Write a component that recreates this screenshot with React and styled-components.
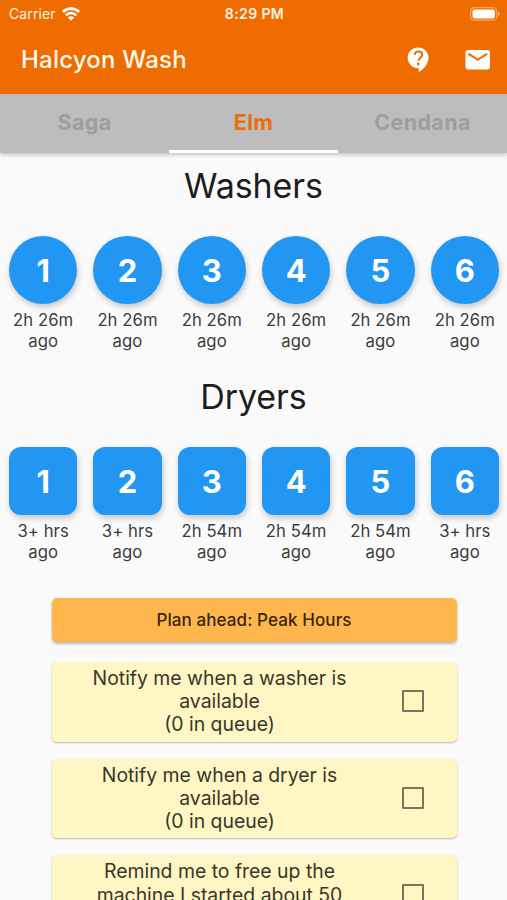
import React from 'react';
import styled, { createGlobalStyle } from 'styled-components';

const GlobalStyle = createGlobalStyle`
  *, *::before, *::after {
    box-sizing: border-box;
  }

  body {
    margin: 0;
    background: #fafafa;
    font-family: Inter, Roboto, sans-serif;
  }
`;

const Screen = styled.div`
  display: flex;
  flex-direction: column;
  width: 507px;
  height: 900px;
  overflow: hidden;
  background: #fafafa;
`;

const StatusBar = styled.div`
  display: grid;
  grid-template-columns: 1fr auto 1fr;
  align-items: center;
  flex: none;
  height: 27px;
  padding: 0 7px 0 9px;
  background: #ef6c00;
  color: #fff3e6;
`;

const Carrier = styled.div`
  display: flex;
  align-items: center;
  gap: 6px;
  font-size: 14px;
  letter-spacing: 0.1px;
`;

const Clock = styled.div`
  font-size: 14px;
  font-weight: 600;
  letter-spacing: 0.4px;
`;

const Battery = styled.svg`
  justify-self: end;
`;

const AppBar = styled.header`
  display: flex;
  align-items: center;
  flex: none;
  height: 66.5px;
  padding: 0 14.5px 1.5px 21px;
  background: #ef6c00;
  color: #fff;
`;

const AppTitle = styled.h1`
  flex: 1;
  margin: 0;
  font-size: 24px;
  font-weight: 500;
  letter-spacing: 0.2px;
  color: #fff8ee;
`;

const Actions = styled.div`
  display: flex;
  gap: 29.5px;
`;

const Tabs = styled.nav`
  display: grid;
  grid-template-columns: repeat(3, 1fr);
  flex: none;
  height: 59px;
  background: #bdbdbd;
  box-shadow: 0 2px 4px rgba(0, 0, 0, 0.22);
`;

const Tab = styled.div`
  display: flex;
  align-items: center;
  justify-content: center;
  border-bottom: 3px solid ${({ $active }) => ($active ? '#fff' : 'transparent')};
  font-size: 21.5px;
  font-weight: 700;
  letter-spacing: 0.35px;
  color: ${({ $active }) => ($active ? '#ea6f0a' : '#9e9e9e')};
`;

const Section = styled.section`
  flex: none;
  height: 211.3px;
  padding-top: 11px;
`;

const SectionTitle = styled.h2`
  margin: 0 0 29px;
  font-size: 34px;
  font-weight: 400;
  line-height: 43px;
  letter-spacing: -0.1px;
  text-align: center;
  color: #1d1d1d;
`;

const Machines = styled.div`
  display: grid;
  grid-template-columns: repeat(6, 1fr);
  padding-left: 1px;
`;

const Machine = styled.div`
  display: flex;
  flex-direction: column;
  align-items: center;
`;

const MachineButton = styled.div`
  display: flex;
  align-items: center;
  justify-content: center;
  width: 68.5px;
  height: 68.5px;
  padding-top: 1.5px;
  border-radius: ${({ $round }) => ($round ? '50%' : '12px')};
  background: #2196f3;
  box-shadow: 1px 3px 6px rgba(0, 0, 0, 0.22);
  font-size: 31px;
  font-weight: 700;
  color: #fff;
`;

const MachineTime = styled.div`
  width: 68px;
  margin-top: 6px;
  font-size: 16.7px;
  line-height: 21px;
  letter-spacing: 0.05px;
  text-align: center;
  color: #3c3c3c;
`;

const Options = styled.div`
  display: flex;
  flex-direction: column;
  flex: none;
  gap: 17px;
  margin: 22.8px 50.5px 0 51.5px;
`;

const PeakButton = styled.div`
  display: flex;
  align-items: center;
  justify-content: center;
  height: 44px;
  margin-bottom: 3px;
  border-radius: 5px;
  background: #ffb74d;
  box-shadow: 0 2px 3px rgba(0, 0, 0, 0.28);
  font-size: 17px;
  font-weight: 500;
  letter-spacing: 0.1px;
  color: #36270f;
`;

const OptionCard = styled.div`
  display: flex;
  height: 79.7px;
  padding: 5px 33px 0 20px;
  border-radius: 5px;
  background: #fef7c3;
  box-shadow: 0 1px 2px rgba(0, 0, 0, 0.28);
`;

const OptionText = styled.div`
  width: 296px;
  font-size: 19.4px;
  line-height: 23.3px;
  text-align: center;
  white-space: pre-line;
  color: #38362d;
`;

const Checkbox = styled.div`
  width: 22px;
  height: 22px;
  margin: 23.5px 0 0 auto;
  border: 2px solid #79755f;
  border-radius: 1px;
`;

const washers = ['2h 26m', '2h 26m', '2h 26m', '2h 26m', '2h 26m', '2h 26m'];
const dryers = ['3+ hrs', '3+ hrs', '2h 54m', '2h 54m', '2h 54m', '3+ hrs'];

const options = [
  'Notify me when a washer is\navailable\n(0 in queue)',
  'Notify me when a dryer is\navailable\n(0 in queue)',
  'Remind me to free up the\nmachine I started about 50',
];

const WifiIcon = () => (
  <svg width="18" height="14" viewBox="0 0 18 14" fill="none" stroke="#fff" strokeWidth="2.6">
    <path d="M0.9 5C5.4 0.5 12.6 0.5 17.1 5" />
    <path d="M3.8 8.3C6.8 5.3 11.2 5.3 14.2 8.3" />
    <path d="M9 13.8L5.9 10.5C7.6 8.8 10.4 8.8 12.1 10.5Z" fill="#fff" stroke="none" />
  </svg>
);

const BatteryIcon = () => (
  <Battery width="30" height="14" viewBox="0 0 30 14">
    <rect x="0.6" y="0.6" width="26.2" height="12.6" rx="3.8" fill="none" stroke="#fff" strokeOpacity="0.4" strokeWidth="1.2" />
    <rect x="2.5" y="2.4" width="22.4" height="9" rx="2.2" fill="#fff" />
    <path d="M28 4.8c1.1.4 1.7 1.2 1.7 2.1s-.6 1.7-1.7 2.1z" fill="#fff" fillOpacity="0.45" />
  </Battery>
);

const SupportIcon = () => (
  <svg width="29.4" height="29.4" viewBox="0 0 24 24">
    <path d="M11.5 2C6.81 2 3 5.81 3 10.5S6.81 19 11.5 19h.5v3c4.86-2.34 8-7 8-11.5C20 5.81 16.19 2 11.5 2z" fill="#fff" />
    <path d="M8.6 7.9C9 6.2 10.2 5.3 11.8 5.3c1.8 0 3.1 1.1 3.1 2.7 0 2.3-2.9 2.5-3.1 4.9" fill="none" stroke="#ef6c00" strokeWidth="1.7" />
    <circle cx="11.7" cy="15.5" r="1.15" fill="#ef6c00" />
  </svg>
);

const MailIcon = () => (
  <svg width="29.4" height="29.4" viewBox="0 0 24 24" fill="#fff">
    <path d="M20 4H4c-1.1 0-2 .9-2 2v12c0 1.1.9 2 2 2h16c1.1 0 2-.9 2-2V6c0-1.1-.9-2-2-2zm-.4 4.25l-7.07 4.42c-.32.2-.74.2-1.06 0L4.4 8.25c-.25-.16-.4-.43-.4-.72 0-.67.73-1.07 1.3-.72L12 11l6.7-4.19c.57-.35 1.3.05 1.3.72 0 .29-.15.56-.4.72z" />
  </svg>
);

const MachineSection = ({ title, times, round }) => (
  <Section>
    <SectionTitle>{title}</SectionTitle>
    <Machines>
      {times.map((time, index) => (
        <Machine key={index}>
          <MachineButton $round={round}>{index + 1}</MachineButton>
          <MachineTime>
            {time}
            <br />
            ago
          </MachineTime>
        </Machine>
      ))}
    </Machines>
  </Section>
);

const App = () => {
  return (
    <>
      <GlobalStyle />
      <Screen>
        <StatusBar>
          <Carrier>
            Carrier
            <WifiIcon />
          </Carrier>
          <Clock>8:29 PM</Clock>
          <BatteryIcon />
        </StatusBar>
        <AppBar>
          <AppTitle>Halcyon Wash</AppTitle>
          <Actions>
            <SupportIcon />
            <MailIcon />
          </Actions>
        </AppBar>
        <Tabs>
          <Tab>Saga</Tab>
          <Tab $active>Elm</Tab>
          <Tab>Cendana</Tab>
        </Tabs>
        <MachineSection title="Washers" times={washers} round />
        <MachineSection title="Dryers" times={dryers} />
        <Options>
          <PeakButton>Plan ahead: Peak Hours</PeakButton>
          {options.map((option) => (
            <OptionCard key={option}>
              <OptionText>{option}</OptionText>
              <Checkbox />
            </OptionCard>
          ))}
        </Options>
      </Screen>
    </>
  );
};

export default App;
